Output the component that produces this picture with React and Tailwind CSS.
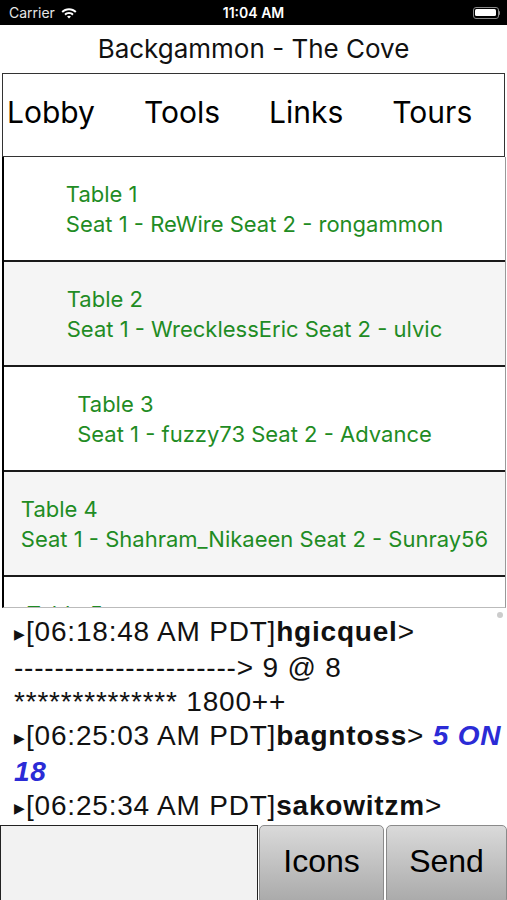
import React from 'react';

const tables = [
  { name: 'Table 1', seats: 'Seat 1 - ReWire Seat 2 - rongammon' },
  { name: 'Table 2', seats: 'Seat 1 - WrecklessEric Seat 2 - ulvic' },
  { name: 'Table 3', seats: 'Seat 1 - fuzzy73 Seat 2 - Advance' },
  { name: 'Table 4', seats: 'Seat 1 - Shahram_Nikaeen Seat 2 - Sunray56' },
  { name: 'Table 5', seats: 'Seat 1 - MarcOlsen_BG Seat 2 - diceroller77' },
];

const sf = { fontFamily: 'Inter, "Noto Sans", sans-serif' };
const helv = { fontFamily: '"Liberation Sans", Arial, sans-serif' };

const Wifi = () => (
  <svg width="16" height="12" viewBox="0 0 16 12" fill="white">
    <path d="M8 1.2c2.9 0 5.5 1.1 7.5 3l-1.4 1.5C12.5 4.1 10.4 3.2 8 3.2S3.5 4.1 1.9 5.7L.5 4.2c2-1.9 4.6-3 7.5-3z" />
    <path d="M8 5c1.8 0 3.4.7 4.6 1.9l-1.4 1.5C10.4 7.5 9.3 7 8 7s-2.4.5-3.2 1.4L3.4 6.9C4.6 5.7 6.2 5 8 5z" />
    <path d="M8 8.8c.8 0 1.4.3 1.9.8L8 11.6 6.1 9.6c.5-.5 1.1-.8 1.9-.8z" />
  </svg>
);

const Battery = () => (
  <div className="flex items-center">
    <div className="w-[26px] h-[12px] rounded-[3px] border border-[#888] p-[1.5px]">
      <div className="w-full h-full bg-white rounded-[1.5px]" />
    </div>
    <div className="w-[1.5px] h-[4px] bg-[#888] rounded-r-sm" />
  </div>
);

const Arrow = () => <span className="text-[14px] align-[2px] mr-[1px] tracking-normal">▶</span>;

export default function App() {
  return (
    <div className="w-[507px] h-[900px] bg-white flex flex-col overflow-hidden relative">
      {/* status bar */}
      <div className="h-[25px] bg-black flex items-center px-[9px] relative shrink-0" style={sf}>
        <span className="text-[14px] text-[#e6e6e6] mr-[6px]">Carrier</span>
        <Wifi />
        <span className="absolute left-1/2 -translate-x-1/2 text-[14px] font-semibold text-white">11:04 AM</span>
        <div className="ml-auto mr-[-2px]">
          <Battery />
        </div>
      </div>

      {/* title */}
      <div className="h-[48px] pb-[2px] flex items-center justify-center text-[26px] text-[#111] shrink-0" style={sf}>
        Backgammon - The Cove
      </div>

      {/* nav */}
      <div className="h-[84px] mx-[2px] border border-[#333] flex items-center gap-[49px] pl-[4px] pb-[6px] text-[30px] text-black shrink-0" style={sf}>
        <span>Lobby</span>
        <span>Tools</span>
        <span>Links</span>
        <span>Tours</span>
      </div>

      {/* table list */}
      <div className="h-[451px] overflow-hidden ml-[2px] mr-[1px] border-l-2 border-black border-r border-r-[#999] border-b border-b-[#bbb] shrink-0" style={sf}>
        {tables.map((t, i) => (
          <div
            key={t.name}
            className={`h-[105px] shrink-0 border-b-2 border-[#1a1a1a] flex items-center justify-center ${i % 2 ? 'bg-[#f5f5f5]' : 'bg-white'}`}
          >
            <div className="text-[22px] leading-[30px] text-[#1f8c24] whitespace-nowrap">
              <div>{t.name}</div>
              <div>{t.seats}</div>
            </div>
          </div>
        ))}
      </div>

      {/* chat */}
      <div className="flex-1 pt-[7px] px-[14px] text-[28px] tracking-[0.8px] leading-[34px] text-[#111] relative whitespace-nowrap" style={helv}>
        <div className="absolute right-[4px] top-[4px] w-[6px] h-[6px] rounded-full bg-[#ccc]" />
        <div><Arrow />[06:18:48 AM PDT]<b>hgicquel</b>&gt;</div>
        <div>----------------------&gt; 9 @ 8</div>
        <div>************** 1800++</div>
        <div>
          <Arrow />[06:25:03 AM PDT]<b>bagntoss</b>&gt; <b className="italic text-[#2b2bd6]">5 ON</b>
        </div>
        <div><b className="italic text-[#2b2bd6]">18</b></div>
        <div><Arrow />[06:25:34 AM PDT]<b>sakowitzm</b>&gt;</div>
      </div>

      {/* input bar */}
      <div className="h-[79px] flex shrink-0" style={helv}>
        <div className="w-[258px] bg-[#f2f2f2] border border-[#222]" />
        <button className="w-[125px] ml-px pb-[8px] rounded-[5px] border border-[#8a8a8a] bg-gradient-to-b from-[#dadada] to-[#a9a9a9] text-[32px] text-black">
          Icons
        </button>
        <button className="flex-1 ml-[2px] pb-[8px] rounded-[5px] border border-[#8a8a8a] bg-gradient-to-b from-[#dadada] to-[#a9a9a9] text-[32px] text-black">
          Send
        </button>
      </div>
    </div>
  );
}
